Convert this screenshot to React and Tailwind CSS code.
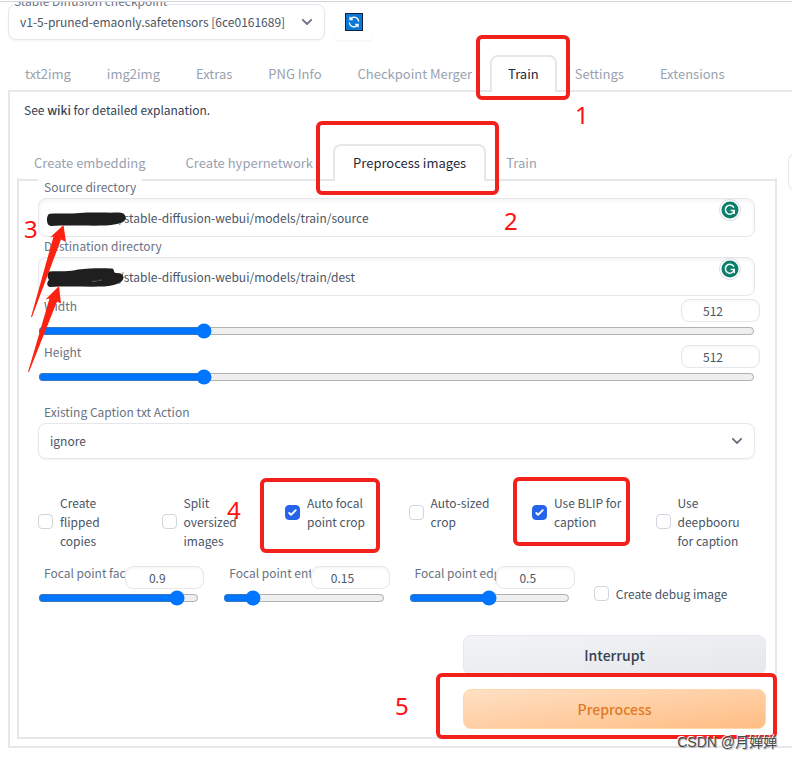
import React, { useState } from "react";

const MAIN_TABS = ["txt2img", "img2img", "Extras", "PNG Info", "Checkpoint Merger", "Train", "Settings", "Extensions"];
const TRAIN_TABS = ["Create embedding", "Create hypernetwork", "Preprocess images", "Train"];

function Chevron({ className }) {
  return (
    <svg viewBox="0 0 12 12" className={className} fill="none" stroke="#6b7280" strokeWidth="1.8" strokeLinecap="round" strokeLinejoin="round">
      <path d="M1.8 3.8 L6 8 L10.2 3.8" />
    </svg>
  );
}

function TabBar({ tabs, selected, label, roomy = false }) {
  const pad = roomy ? "px-5" : "px-[18px]";
  return (
    <div role="tablist" aria-label={label} className="flex h-[37px]">
      {tabs.map((tab, i) =>
        i === selected ? (
          <button key={tab} role="tab" aria-selected="true" className={"relative shrink-0 rounded-t-lg border-2 border-b-0 border-gray-200 bg-white pb-px text-[13px] whitespace-nowrap text-gray-800 " + (roomy ? "px-[18px]" : "px-4")}>
            {tab}
          </button>
        ) : (
          <button key={tab} role="tab" aria-selected="false" className={"shrink-0 border-b-2 border-gray-200 pt-[2px] text-[13px] whitespace-nowrap text-gray-400 first:pl-[17px] " + pad}>
            {tab}
          </button>
        )
      )}
      <div className="flex-1 border-b-2 border-gray-200" />
    </div>
  );
}

function Grammarly() {
  return (
    <svg viewBox="0 0 22 22" className="absolute top-px right-[14px] size-[22px]">
      <circle cx="11" cy="11" r="10.5" fill="#fff" stroke="#d9dde6" />
      <circle cx="11" cy="11" r="8.5" fill="#0b7f6c" />
      <path d="M14.6 8.1 A4.5 4.5 0 1 0 15.2 12" fill="none" stroke="#fff" strokeWidth="1.5" strokeLinecap="round" />
      <path d="M11.6 11.6 H15.2 V15" fill="none" stroke="#fff" strokeWidth="1.5" />
    </svg>
  );
}

function DirectoryField({ id, label, value }) {
  const [text, setText] = useState(value);
  return (
    <div>
      <label htmlFor={id} className="relative block w-fit bg-white px-[6px] pb-[2px] text-xs leading-[18px] text-gray-500">{label}</label>
      <div className="relative">
        <input id={id} value={text} onChange={(e) => setText(e.target.value)} className="block h-[39px] w-full rounded-lg border border-gray-200 bg-white pr-12 pl-[80px] text-xs text-gray-600 shadow-[inset_0_2px_4px_rgba(0,0,0,0.05)]" />
        <Grammarly />
      </div>
    </div>
  );
}

function SliderField({ id, label, min, max, step, initial }) {
  const [value, setValue] = useState(initial);
  const change = (e) => setValue(e.target.value);
  return (
    <div className="flex flex-col">
      <div className="flex h-6 items-start">
        <label htmlFor={id} className="w-0 flex-1 overflow-x-clip pl-[6px] text-xs leading-[14px] whitespace-nowrap text-gray-500">{label}</label>
        <input type="number" aria-label={label + " value"} value={value} min={min} max={max} step={step} onChange={change} className="-mr-[5px] h-[23px] w-[79px] shrink-0 rounded-lg border border-gray-200 bg-white text-center text-xs text-gray-600 shadow-[inset_0_1px_3px_rgba(0,0,0,0.05)]" />
      </div>
      <input id={id} type="range" value={value} min={min} max={max} step={step} onChange={change} className="m-0 h-4 w-full accent-[#0075ff]" />
    </div>
  );
}

function Check({ label, initial = false }) {
  const [on, setOn] = useState(initial);
  return (
    <label className="flex items-center gap-[7px] text-xs leading-[19px] text-gray-600">
      <span className="grid size-[15px] shrink-0 place-items-center">
        <input type="checkbox" checked={on} onChange={() => setOn(!on)} className="col-start-1 row-start-1 size-[15px] appearance-none rounded border border-gray-300 bg-white checked:border-[#2563eb] checked:bg-[#2563eb]" />
        {on && (
          <svg viewBox="0 0 16 16" fill="#fff" className="pointer-events-none col-start-1 row-start-1 size-[15px]">
            <path d="M12.207 4.793a1 1 0 010 1.414l-5 5a1 1 0 01-1.414 0l-2-2a1 1 0 011.414-1.414L6.5 9.086l4.293-4.293a1 1 0 011.414 0z" />
          </svg>
        )}
      </span>
      <span className="pr-1">{label}</span>
    </label>
  );
}

function Annotations() {
  return (
    <div className="pointer-events-none absolute inset-0 font-['Noto_Sans',sans-serif] text-2xl leading-6 text-[#ff1010]">
      <div className="absolute top-[35px] left-[476px] h-[65px] w-[94px] rounded-md border-4 border-[#f3211b]" />
      <div className="absolute top-[121px] left-[316px] h-[74px] w-[183px] rounded-md border-4 border-[#f3211b]" />
      <div className="absolute top-[478px] left-[260px] h-[75px] w-[120px] rounded-md border-4 border-[#f3211b]" />
      <div className="absolute top-[477px] left-[513px] h-[69px] w-[117px] rounded-md border-4 border-[#f3211b]" />
      <div className="absolute top-[673px] left-[436px] h-[66px] w-[341px] rounded-md border-4 border-[#f3211b]" />
      <span className="absolute top-[103px] left-[575px]">1</span>
      <span className="absolute top-[209px] left-[504px]">2</span>
      <span className="absolute top-[217px] left-[24px]">3</span>
      <span className="absolute top-[498px] left-[227px]">4</span>
      <span className="absolute top-[694px] left-[395px]">5</span>
      <svg viewBox="0 0 140 200" className="absolute top-[200px] left-0 h-[200px] w-[140px]">
        <g fill="#1f1f1f">
          <path d="M49 14 C54 13 72 14 80 13 C92 12 108 13 118 12.500 C124 12 127 16 125 20 C123 24 112 25 106 25.500 C90 26 66 25 51 26 C46 26 46 16 49 14Z" />
          <path d="M49 71.500 C60 71 70 72 78 69.500 C90 68 104 68 112 68.500 C115 69 113 73 116 73 C124 72.500 125 78 122 81 C118 85 110 86 104 86.500 C88 87 66 86 50 87 C46 86 47 82 49 80 C47 77 47 74 49 71.500Z" />
        </g>
        <path d="M92 81.500 L97 81 M98 80.500 L102 80" stroke="#777" strokeWidth="0.7" />
        <g fill="#fc2211">
          <path d="M63.500 25 L50 37.500 L53.500 36.500 L31 117 L32 117 L61 39.500 L66 42 Z" />
          <path d="M59 86 L45.500 99.500 L49.500 98.500 L28 172 L29 172 L57 101.500 L61 103.500 Z" />
        </g>
      </svg>
    </div>
  );
}

export default function App() {
  return (
    <div className="relative overflow-hidden bg-white pt-px pb-3 font-['Noto_Sans_CJK_SC',sans-serif]">
      <header className="flex h-[54px] items-start gap-[10px] overflow-hidden border-t border-gray-300 pl-2">
        <div className="-mt-[8px] w-[317px]">
          <label htmlFor="checkpoint" className="relative z-10 ml-[6px] block w-fit bg-white text-xs leading-[14px] text-gray-500">Stable Diffusion checkpoint</label>
          <div className="relative -mt-1">
            <select id="checkpoint" className="block h-9 w-full appearance-none rounded-lg border border-gray-200 bg-white pl-[11px] text-xs text-gray-600 shadow-xs">
              <option>v1-5-pruned-emaonly.safetensors [6ce0161689]</option>
            </select>
            <Chevron className="pointer-events-none absolute top-3 right-3 size-3" />
          </div>
        </div>
        <button aria-label="Refresh checkpoints" className="mt-[2px] grid h-9 w-[38px] place-items-center rounded-sm shadow-xs">
          <svg viewBox="0 0 18 18" className="size-[18px]">
            <rect x="0.500" y="0.500" width="17" height="17" fill="#0b78d6" stroke="#10203a" />
            <g fill="none" stroke="#fff" strokeWidth="1.3">
              <path d="M4.300 9.500 A4.700 4.700 0 0 0 12.600 12" />
              <path d="M13.700 8.500 A4.700 4.700 0 0 0 5.400 6" />
              <path d="M5 3.700 V6.500 H7.800 M13 14.300 V11.500 H10.200" />
            </g>
          </svg>
        </button>
      </header>

      <main className="ml-2">
        <TabBar tabs={MAIN_TABS} selected={5} label="Main sections" />
        <div className="flex border-b-2 border-l-2 border-gray-200 pb-[7px]">
          <section className="mr-[11px] flex-1 pl-[7px]">
            <p className="pt-[8px] pl-[7px] text-xs leading-5 text-gray-700">
              See <a href="#wiki" className="font-medium">wiki</a> for detailed explanation.
            </p>
            <div className="mt-[24px]">
              <TabBar tabs={TRAIN_TABS} selected={2} label="Training tools" roomy />
            </div>
            <div className="-mt-[3px] border-x-2 border-b-2 border-gray-200 pr-5 pb-2 pl-[19px]">
              <DirectoryField id="source" label="Source directory" value="/stable-diffusion-webui/models/train/source" />
              <DirectoryField id="dest" label="Destination directory" value="/stable-diffusion-webui/models/train/dest" />
              <div className="mt-[3px] flex flex-col gap-[6px]">
                <SliderField id="width" label="Width" min={64} max={2048} step={8} initial={512} />
                <SliderField id="height" label="Height" min={64} max={2048} step={8} initial={512} />
              </div>
              <label htmlFor="action" className="mt-[17px] block pl-[6px] text-xs leading-5 text-gray-500">Existing Caption txt Action</label>
              <div className="relative mt-px">
                <select id="action" className="block h-9 w-full appearance-none rounded-lg border border-gray-200 bg-white pl-[11px] text-xs text-gray-600 shadow-xs">
                  <option>ignore</option>
                </select>
                <Chevron className="pointer-events-none absolute top-3 right-3 size-3" />
              </div>
              <div className="mt-[34px] grid grid-cols-6 items-start gap-6">
                <Check label="Create flipped copies" />
                <Check label="Split oversized images" />
                <Check label="Auto focal point crop" initial />
                <Check label="Auto-sized crop" />
                <Check label="Use BLIP for caption" initial />
                <Check label="Use deepbooru for caption" />
              </div>
              <div className="mt-[16px] grid grid-cols-4 items-end gap-6">
                <SliderField id="face" label="Focal point face weight" min={0} max={1} step={0.05} initial={0.9} />
                <SliderField id="entropy" label="Focal point entropy weight" min={0} max={1} step={0.05} initial={0.15} />
                <SliderField id="edges" label="Focal point edges weight" min={0} max={1} step={0.05} initial={0.5} />
                <div className="pb-[3px] whitespace-nowrap">
                  <Check label="Create debug image" />
                </div>
              </div>
              <div className="-mr-[11px] mt-[29px] ml-auto flex w-[303px] flex-col gap-[14px]">
                <button className="h-10 rounded-lg border border-gray-200 bg-linear-to-br from-gray-100 to-gray-200 text-sm font-medium text-gray-700">Interrupt</button>
                <button className="h-10 rounded-lg border border-orange-200 bg-linear-to-br from-[#ffe0c4] to-[#ffbd83] text-sm font-medium text-[#e07a26]">Preprocess</button>
              </div>
            </div>
          </section>
          <aside className="mt-[61px] -mr-2 h-[38px] w-[12px] rounded-l-lg border border-r-0 border-gray-200" />
        </div>
      </main>

      <Annotations />
      <div className="absolute right-[15px] bottom-2 font-['Liberation_Sans','Noto_Sans_CJK_SC',sans-serif] text-sm leading-5 text-[#4a4a4a] [text-shadow:-1px_-1px_0_#fff,1px_1px_1px_#aaa]">CSDN @月婵婵</div>
    </div>
  );
}
